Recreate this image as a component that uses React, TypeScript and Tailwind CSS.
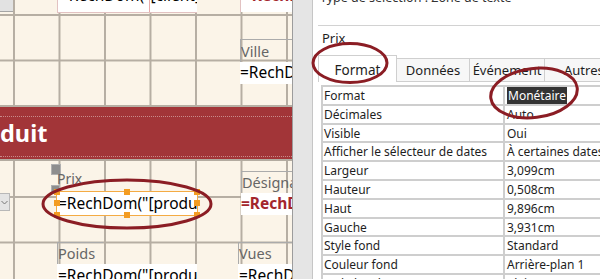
const rows: [string, string][] = [
  ['Format', 'Monétaire'],
  ['Décimales', 'Auto'],
  ['Visible', 'Oui'],
  ['Afficher le sélecteur de dates', 'À certaines dates'],
  ['Largeur', '3,099cm'],
  ['Hauteur', '0,508cm'],
  ['Haut', '9,896cm'],
  ['Gauche', '3,931cm'],
  ['Style fond', 'Standard'],
  ['Couleur fond', 'Arrière-plan 1'],
  ['Style bordure', 'Plein'],
]

function Handle({ x, y }: { x: number; y: number }) {
  return (
    <div
      className="absolute h-[6px] w-[6px] bg-[#f39c22]"
      style={{ left: x - 3, top: y - 3 }}
    />
  )
}

function FormPane() {
  return (
    <div className="flex w-[292px] shrink-0 flex-col">
      {/* detail section, upper part */}
      <div className="relative h-[107px] shrink-0 bg-[#fbf4e8] bg-[linear-gradient(to_right,#b6aea3_2px,transparent_2px),linear-gradient(to_bottom,#b6aea3_2px,transparent_2px)] bg-size-[45.5px_45.5px] bg-position-[13px_14px]">
        <div className="absolute left-0 top-0 h-[12px] w-[13px] border-b border-[#a5a5a5] bg-[#e2e2e2]" />
        <div className="absolute left-[57px] top-0 h-[13px] w-[140px] overflow-hidden border-b border-l border-[#e2c2c2] bg-white">
          <p className="-mt-[14px] whitespace-nowrap pl-[2px] text-[15.5px] leading-[18px] text-black">=RechDom("[client]"</p>
          <div className="absolute left-[91px] top-0 h-full w-px bg-[#e7a9a9]" />
        </div>
        <div className="absolute left-[240px] top-0 h-[12px] w-[52px] overflow-hidden border-l border-[#e2c2c2] bg-white">
          <p className="-mt-[14px] whitespace-nowrap pl-[2px] text-[15.5px] font-bold leading-[18px] text-[#a3262d]">=RechDom</p>
        </div>
        <div className="absolute left-[240px] top-[39px] h-[23px] w-[52px] overflow-hidden border-l border-t border-[#ababab] pt-[2px] text-[14.5px] leading-[18px] text-[#666]">
          Ville
        </div>
        <div className="absolute left-[240px] top-[62px] h-[22px] w-[52px] overflow-hidden bg-white pt-[1px] text-[15.5px] leading-[19px] text-black">
          <span className="whitespace-nowrap">=RechDom</span>
        </div>
      </div>

      {/* section header band */}
      <div className="relative h-[52px] shrink-0 overflow-hidden bg-[#a23538]">
        <div className="absolute inset-x-0 top-[9px] border-t border-dotted border-[#c98a8a]" />
        <div className="absolute inset-x-0 top-[49px] border-t border-dotted border-[#c98a8a]" />
        <p className="pt-[14px] text-[23.5px] font-bold leading-[24px] text-white">duit</p>
      </div>

      {/* detail section, lower part */}
      <div className="relative flex-1 border-t-2 border-[#b3aba0] bg-[#fbf4e8] bg-[linear-gradient(to_right,#b6aea3_2px,transparent_2px),linear-gradient(to_bottom,#b6aea3_2px,transparent_2px)] bg-size-[45.5px_45.5px] bg-position-[13px_35px]">
        <div className="absolute left-0 top-[32px] flex h-[18px] w-[10px] items-center justify-center border-y border-r border-[#b8b8b8] bg-[#e4e4e4]">
          <svg width="7" height="5" viewBox="0 0 7 5">
            <path d="M0.5 1 L3.5 4 L6.5 1" fill="none" stroke="#777" strokeWidth="1" />
          </svg>
        </div>

        <div className="absolute left-[51px] top-[3px] h-[11px] w-[10px] border border-[#b0b0b0] bg-[#8e8e8e]" />
        <div className="absolute left-[51px] top-[24px] h-[9px] w-[9px] border border-[#b0b0b0] bg-[#8e8e8e]" />

        <div className="absolute left-[57px] top-[9px] text-[14px] leading-[18px] text-[#666]">Prix</div>
        <div className="absolute left-[56px] top-[30px] h-[25px] w-[142px] overflow-hidden border border-[#f4ab44] bg-white pl-[1px] pt-[2px] text-[15.5px] leading-[19px] text-black">
          <span className="whitespace-nowrap">=RechDom("[produit]";"[Produits]")</span>
        </div>
        <Handle x={57} y={31} />
        <Handle x={127} y={31} />
        <Handle x={197} y={31} />
        <Handle x={57} y={42} />
        <Handle x={197} y={42} />
        <Handle x={57} y={54} />
        <Handle x={127} y={54} />
        <Handle x={197} y={54} />

        <div className="absolute left-[241px] top-[10px] h-[21px] w-[51px] overflow-hidden border-l border-t border-[#ababab] pt-[1px] text-[14.5px] leading-[18px] text-[#666]">
          <span className="whitespace-nowrap">Désignation</span>
        </div>
        <div className="absolute left-[241px] top-[32px] h-[22px] w-[51px] overflow-hidden bg-white pt-[1px] text-[15.5px] font-bold leading-[19px] text-[#a3262d]">
          <span className="whitespace-nowrap">=RechDom</span>
        </div>

        <div className="absolute left-[57px] top-[81px] h-[22px] w-[46px] border-l border-t border-[#ababab] pt-[1px] text-[14.5px] leading-[18px] text-[#666]">
          Poids
        </div>
        <div className="absolute left-[57px] top-[103px] h-[25px] w-[140px] overflow-hidden bg-white pl-[1px] pt-[2px] text-[15.5px] leading-[19px] text-black">
          <span className="whitespace-nowrap">=RechDom("[produit]";"[Produits]")</span>
        </div>

        <div className="absolute left-[238px] top-[81px] h-[22px] w-[54px] border-l border-t border-[#ababab] pt-[1px] text-[14.5px] leading-[18px] text-[#666]">
          Vues
        </div>
        <div className="absolute left-[238px] top-[103px] h-[25px] w-[54px] overflow-hidden bg-white pl-[1px] pt-[2px] text-[15.5px] leading-[19px] text-black">
          <span className="whitespace-nowrap">=RechDom</span>
        </div>
      </div>
    </div>
  )
}

function PropertySheet() {
  return (
    <div className="w-[287px] shrink-0 bg-white text-[12px] text-[#1e1e1e]">
      <div className="h-[25px] overflow-hidden pl-[7px]">
        <p className="-mt-[10px] whitespace-nowrap text-[12.5px] leading-[16px] text-[#333]">Type de sélection : Zone de texte</p>
      </div>
      <div className="ml-[5px] h-[28px] border-t border-[#d2d2d2] pl-[4px] pt-[4px] text-[13px] leading-[16px]">Prix</div>

      <div className="ml-[5px] flex h-[29px] items-end text-[13px] leading-[16px]">
        <div className="flex h-[27px] w-[79px] shrink-0 items-center justify-center border-x border-t border-[#cfcfcf] bg-white pt-[1px] text-[13.5px]">
          Format
        </div>
        <div className="flex h-[24px] w-[73px] shrink-0 items-center justify-center border-b border-r border-t border-[#cfcfcf] bg-[#f7f7f7]">
          Données
        </div>
        <div className="flex h-[24px] w-[75px] shrink-0 items-center justify-center border-b border-r border-t border-[#cfcfcf] bg-[#f7f7f7]">
          Événement
        </div>
        <div className="flex h-[24px] flex-1 items-center overflow-hidden border-b border-t border-[#cfcfcf] bg-[#f7f7f7] pl-[19px]">
          <span className="whitespace-nowrap">Autres propriétés</span>
        </div>
      </div>

      <div className="ml-[8px] mt-[3px] border-l-2 border-t-2 border-[#cecece]">
        {rows.map(([label, value], i) => (
          <div key={label} className="flex h-[18.8px] border-b-2 border-[#cecece] leading-[16px]">
            <div className="w-[182px] shrink-0 overflow-hidden whitespace-nowrap border-r-2 border-[#cecece] pl-[1px] pt-[1px]">
              {label}
            </div>
            <div className="flex-1 overflow-hidden whitespace-nowrap pl-[2px] pt-[1px]">
              {i === 0 ? <span className="bg-[#333] px-[1px] text-white">{value}</span> : value}
            </div>
          </div>
        ))}
      </div>
    </div>
  )
}

export default function App() {
  return (
    <div className="relative flex h-[279px] w-[600px] overflow-hidden bg-white font-['Noto_Sans',sans-serif]">
      <FormPane />
      <div className="w-[21px] shrink-0 border-l border-r border-l-[#9c9c9c] border-r-[#c6c6c6] bg-[#e5e5e5]" />
      <PropertySheet />

      {/* hand-drawn red circles */}
      <svg className="pointer-events-none absolute inset-0" width="600" height="279" viewBox="0 0 600 279">
        <g fill="none" stroke="#8b1d24" strokeWidth="3">
          <ellipse cx="127" cy="204" rx="84" ry="24" />
          <ellipse cx="350" cy="63" rx="37" ry="19.5" />
          <ellipse cx="534" cy="93" rx="43.5" ry="24.5" transform="rotate(-7 534 93)" />
        </g>
      </svg>
    </div>
  )
}
